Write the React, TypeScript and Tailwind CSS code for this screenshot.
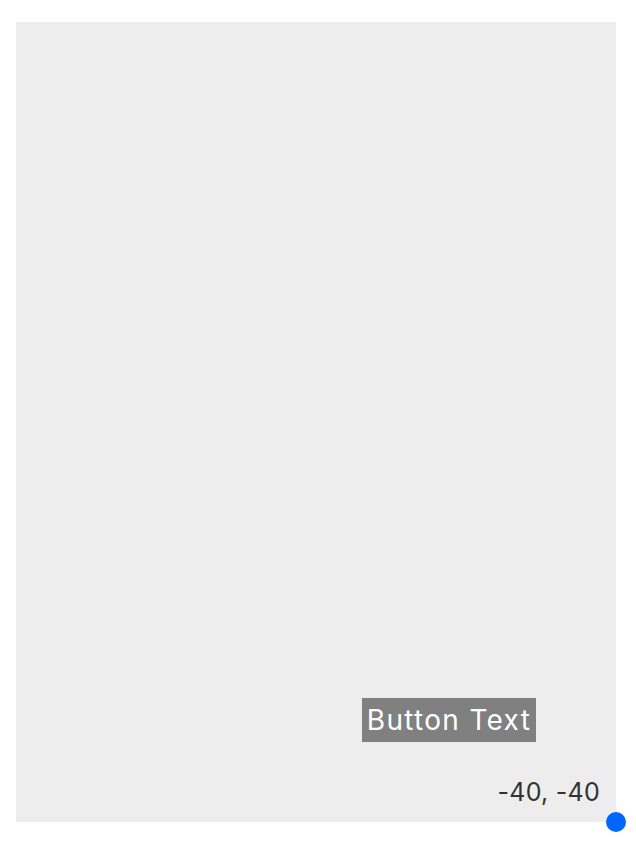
export default function App() {
  return (
    <div className="w-[636px] h-[850px] bg-white pt-[22px] pl-4" style={{ fontFamily: 'Inter, sans-serif' }}>
      <div className="relative w-[600px] h-[800px] bg-[#ededed] flex flex-col justify-end items-end">
        <div className="pr-20">
          <button className="w-[174px] h-[44px] bg-[#808080] text-white text-[28px] leading-[44px] tracking-[1.3px] text-center">
            Button Text
          </button>
        </div>
        <div className="pr-4 pt-[34px] pb-[14px] text-[25px] leading-[32px] tracking-[0.25px] text-[#333]">-40, -40</div>
        <div className="absolute -right-[10px] -bottom-[10px] w-5 h-5 rounded-full bg-[#0066ff]" />
      </div>
    </div>
  );
}
